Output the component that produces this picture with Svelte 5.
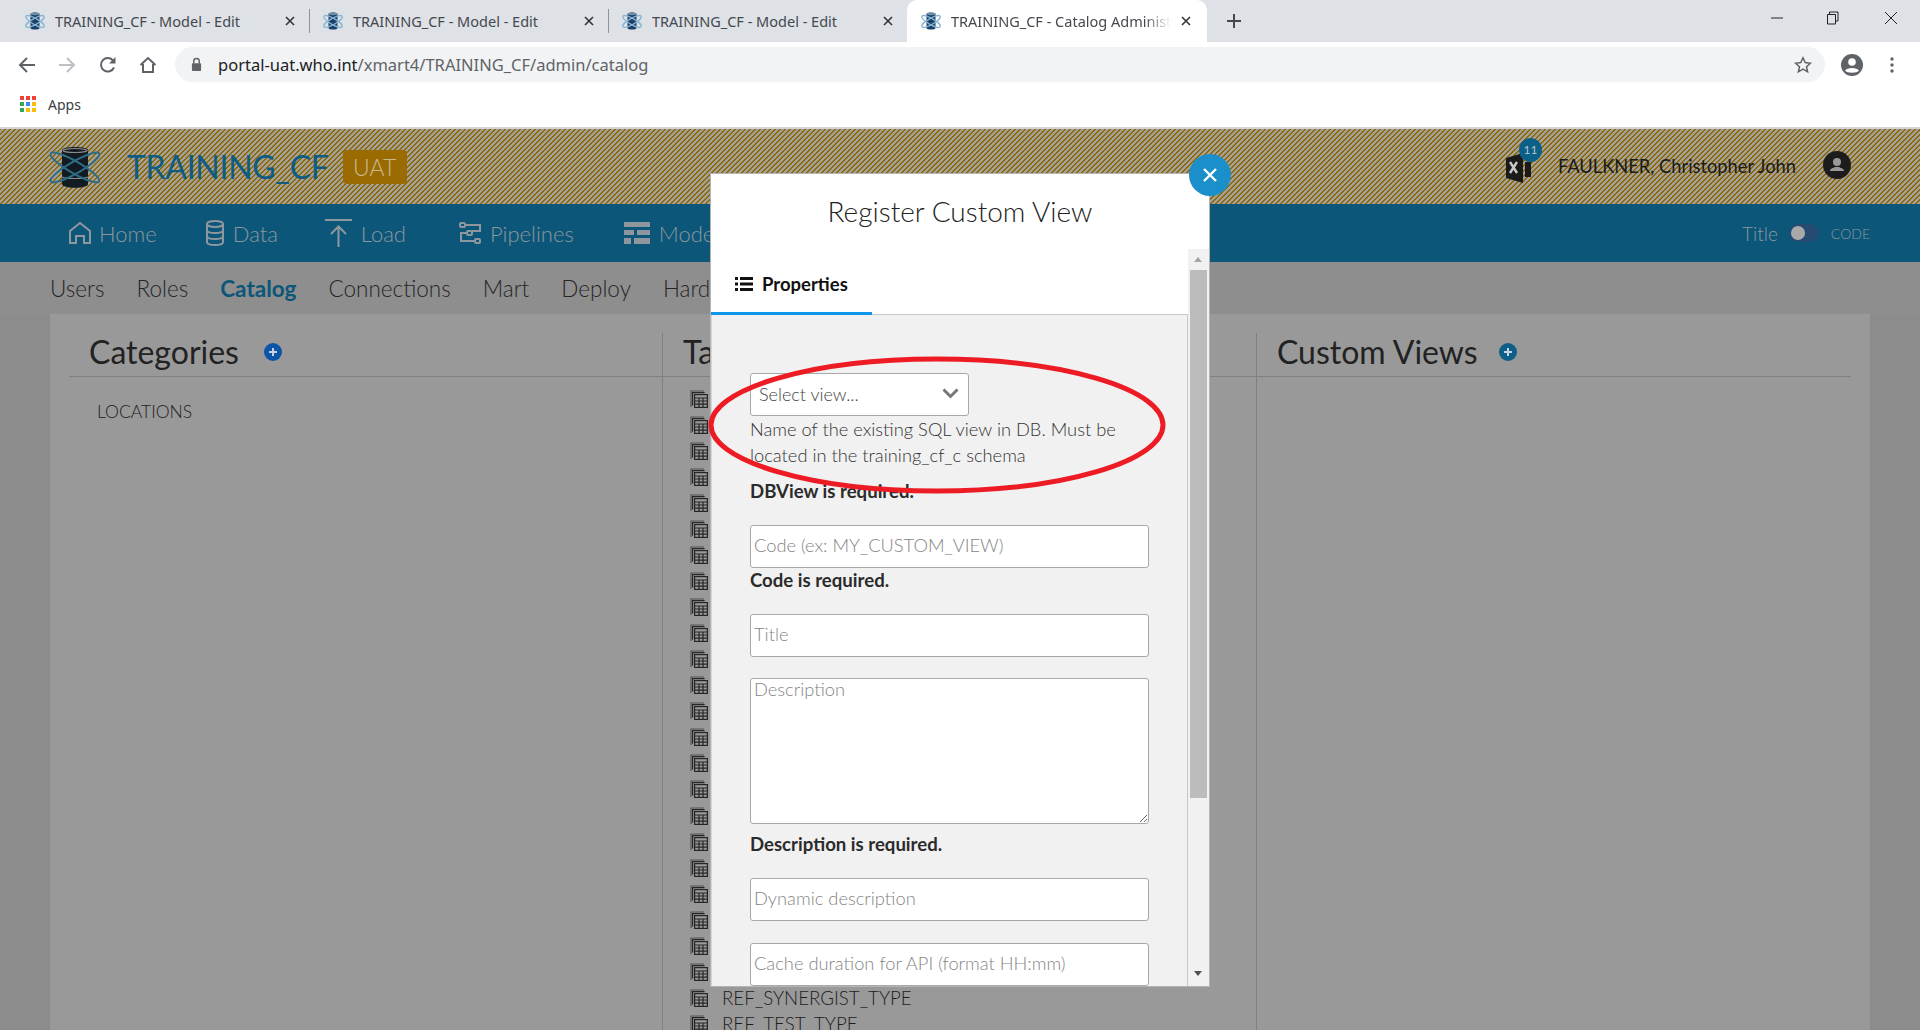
<script>
  const tabs = [
    { title: "TRAINING_CF - Model - Edit" },
    { title: "TRAINING_CF - Model - Edit" },
    { title: "TRAINING_CF - Model - Edit" },
    { title: "TRAINING_CF - Catalog Administrator", active: true }
  ];
  const subnav = ["Users", "Roles", "Catalog", "Connections", "Mart", "Deploy", "Hardening"];
  // only the last two rows stick out under the dialog
  const tables = [...Array(23).fill(""), "REF_SYNERGIST_TYPE", "REF_TEST_TYPE"];
  const appsColors = ["#ef4136", "#ef4136", "#ef4136", "#34a853", "#4285f4", "#fbbc05", "#34a853", "#fbbc05", "#fbbc05"];
</script>

{#snippet favicon()}
  <svg class="favicon" viewBox="0 0 20 20">
    <path d="M5.5 3c0-2 9-2 9 0v14c0 2-9 2-9 0z" fill="#1b3f66" />
    <ellipse cx="10" cy="3" rx="4.5" ry="1.2" fill="#6d8ca6" />
    <ellipse cx="10" cy="10.5" rx="10.5" ry="3" transform="rotate(30 10 10.5)" fill="none" stroke="#86b4d4" stroke-width="1.3" />
    <ellipse cx="10" cy="10.5" rx="10.5" ry="3" transform="rotate(-30 10 10.5)" fill="none" stroke="#86b4d4" stroke-width="1.3" />
  </svg>
{/snippet}

{#snippet tableIcon()}
  <svg class="table-icon" viewBox="0 0 18 18" fill="none" stroke="#262626" stroke-width="1.2">
    <path d="M2.6 15.5V2.6h12" />
    <path d="M1 17V1h13" opacity="0.6" />
    <rect x="4.6" y="4.6" width="12.8" height="12.8" />
    <path d="M4.6 8h12.8M4.6 11h12.8M4.6 14.2h12.8M9 8v9.4M13 8v9.4" />
  </svg>
{/snippet}

<div class="page">
  <div class="tabstrip">
    {#each tabs as tab, i}
      <div class="tab" class:active={tab.active} class:sep={i > 0 && !tab.active}>
        {@render favicon()}
        <span class="tab-title">{tab.title}</span>
        <svg class="tab-x" viewBox="0 0 10 10"><path d="M1 1l8 8M9 1l-8 8" stroke="#333" stroke-width="1.6" /></svg>
      </div>
    {/each}
    <svg class="newtab" viewBox="0 0 14 14"><path d="M7 0v14M0 7h14" stroke="#45484c" stroke-width="2" /></svg>
    <div class="winctl">
      <svg viewBox="0 0 14 14" class="w1"><path d="M1 7h12" stroke="#222" stroke-width="1" /></svg>
      <svg viewBox="0 0 14 14" class="w2"><path d="M3.5 3.5V1h8.5v9h-2.5M1.5 3.5h8v9.5h-8z" fill="none" stroke="#222" stroke-width="1" /></svg>
      <svg viewBox="0 0 14 14" class="w3"><path d="M1 1l12 12M13 1L1 13" stroke="#222" stroke-width="1" /></svg>
    </div>
  </div>

  <div class="toolbar">
    <svg class="tb back" viewBox="0 0 18 18"><path d="M17 9H2M9 2L2 9l7 7" fill="none" stroke="#5f6368" stroke-width="2" /></svg>
    <svg class="tb fwd" viewBox="0 0 18 18"><path d="M1 9h15M9 2l7 7-7 7" fill="none" stroke="#bdc1c6" stroke-width="2" /></svg>
    <svg class="tb reload" viewBox="0 0 18 18"><path d="M15 11.5A6.8 6.8 0 1 1 14.2 4.6" fill="none" stroke="#5f6368" stroke-width="2" /><path d="M16.5 1v6.5H10z" fill="#5f6368" /></svg>
    <svg class="tb home" viewBox="0 0 18 18"><path d="M1.5 9L9 2l7.5 7M4 8v8h10V8" fill="none" stroke="#5f6368" stroke-width="2" /></svg>
    <div class="omnibox">
      <svg class="lock" viewBox="0 0 12 16"><path d="M3 7V4.5a3 3 0 0 1 6 0V7" fill="none" stroke="#5f6368" stroke-width="1.6" /><rect x="1" y="6.5" width="10" height="8.5" rx="1" fill="#5f6368" /></svg>
      <span class="url"><b>portal-uat.who.int</b>/xmart4/TRAINING_CF/admin/catalog</span>
      <svg class="star" viewBox="0 0 18 18"><path d="M9 1.8l2.2 4.8 5.2.6-3.9 3.5 1.1 5.1L9 13.2l-4.6 2.6 1.1-5.1L1.6 7.2l5.2-.6z" fill="none" stroke="#5f6368" stroke-width="1.5" /></svg>
    </div>
    <svg class="profile" viewBox="0 0 22 22">
      <circle cx="11" cy="11" r="11" fill="#5f6368" />
      <circle cx="11" cy="8" r="3.8" fill="#fff" />
      <path d="M4 16.5c2-3.5 12-3.5 14 0-2 3-12 3-14 0z" fill="#fff" />
    </svg>
    <svg class="dots" viewBox="0 0 4 18"><circle cx="2" cy="3" r="1.7" fill="#5f6368" /><circle cx="2" cy="9" r="1.7" fill="#5f6368" /><circle cx="2" cy="15" r="1.7" fill="#5f6368" /></svg>
  </div>

  <div class="bookmarks">
    <div class="apps-grid">
      {#each appsColors as c}<i style="background:{c}"></i>{/each}
    </div>
    <span>Apps</span>
  </div>

  <header class="brand">
    <svg class="logo" viewBox="0 0 50 42">
      <path d="M12 4c0-4 26-4 26 0v34c0 5-26 5-26 0z" fill="#121a22" />
      <ellipse cx="25" cy="4.5" rx="12" ry="2" fill="none" stroke="#8a8a8a" stroke-width="1.2" />
      <path d="M12 31c4 2 22 2 26 0" fill="none" stroke="#8a8a8a" stroke-width="1.2" />
      <ellipse cx="25" cy="21.5" rx="28" ry="6" transform="rotate(30 25 21.5)" fill="none" stroke="#2f6c86" stroke-width="2" />
      <ellipse cx="25" cy="21.5" rx="28" ry="6" transform="rotate(-30 25 21.5)" fill="none" stroke="#2f6c86" stroke-width="2" />
    </svg>
    <span class="brand-name">TRAINING_CF</span>
    <span class="uat">UAT</span>
    <div class="user">
      <div class="excel">
        <svg viewBox="0 0 26 30"><path d="M0 5L17 0v30L0 25z" fill="#1a1a1a" /><path d="M19 9h6v15h-6z" fill="#1a1a1a" /><path d="M4 9l7 11M11 9l-7 11" stroke="#c8c8c8" stroke-width="2.4" /></svg>
        <span class="badge">11</span>
      </div>
      <span class="username">FAULKNER, Christopher John</span>
      <svg class="avatar" viewBox="0 0 28 28">
        <circle cx="14" cy="14" r="14" fill="#1c1c1c" />
        <circle cx="14" cy="11" r="4" fill="#999" />
        <path d="M7 20c0-3 4-3 5-4h4c1 1 5 1 5 4z" fill="#999" />
      </svg>
    </div>
  </header>

  <nav class="mainnav">
    <a class="home-link">
      <svg width="22" height="24" viewBox="0 0 22 24" fill="none" stroke="#8d979d" stroke-width="2"><path d="M1 22V10L11 2l10 8v12h-6v-7H7v7z" /></svg>
      Home
    </a>
    <a class="data-link">
      <svg width="18" height="26" viewBox="0 0 18 26" fill="none" stroke="#8d979d" stroke-width="2"><ellipse cx="9" cy="4" rx="8" ry="3" /><path d="M1 4v18c0 4 16 4 16 0V4M1 10c0 4 16 4 16 0M1 16c0 4 16 4 16 0" /></svg>
      Data
    </a>
    <a class="load-link">
      <svg width="27" height="28" viewBox="0 0 27 28" fill="none" stroke="#8d979d" stroke-width="2"><path d="M0 1h27M13.5 28V8M6 15l7.5-7.5L21 15" /></svg>
      Load
    </a>
    <a class="pipe-link">
      <svg width="22" height="22" viewBox="0 0 22 22" fill="none" stroke="#8d979d" stroke-width="2"><rect x="1" y="1" width="5" height="4" rx="1" /><rect x="8" y="9" width="5" height="4" rx="1" /><rect x="16" y="17" width="5" height="4" rx="1" /><path d="M6 3h15v6h-8M8 11H2v8h14" /></svg>
      Pipelines
    </a>
    <a class="model-link">
      <svg width="26" height="22" viewBox="0 0 26 22" fill="#8d979d"><path d="M0 0h26v5H0zM0 8h10v5H0zM13 8h13v5H13zM0 16h7v6H0zM10 16h16v6H10z" /></svg>
      Models
    </a>
    <div class="code-toggle">
      <span class="toggle-title">Title</span>
      <span class="toggle"><i></i></span>
      <span class="toggle-code">CODE</span>
    </div>
  </nav>

  <nav class="subnav">
    {#each subnav as item}
      <a class:current={item === "Catalog"}>{item}</a>
    {/each}
  </nav>

  <main class="workspace">
    <div class="panel">
      <section class="col">
        <h2>Categories <svg class="add" viewBox="0 0 18 18"><circle cx="9" cy="9" r="9" fill="#0b54a8" /><path d="M9 5v8M5 9h8" stroke="#c8d4e0" stroke-width="2" /></svg></h2>
        <div class="category">LOCATIONS</div>
      </section>
      <section class="col">
        <h2>Tables</h2>
        <ul class="tables">
          {#each tables as name}
            <li>{@render tableIcon()}<span>{name}</span></li>
          {/each}
        </ul>
      </section>
      <section class="col">
        <h2>Custom Views <svg class="add add-views" viewBox="0 0 18 18"><circle cx="9" cy="9" r="9" fill="#0c5f87" /><path d="M9 5v8M5 9h8" stroke="#c8d4e0" stroke-width="2" /></svg></h2>
      </section>
    </div>
  </main>

  <div class="modal">
    <div class="modal-head">Register Custom View</div>
    <div class="modal-scroll">
      <div class="modal-inner">
        <div class="modal-tabs">
          <div class="modal-tab">
            <svg width="18" height="14" viewBox="0 0 18 14" fill="#111"><path d="M0 0h3v3H0zM5 0h13v3H5zM0 5.5h3v3H0zM5 5.5h13v3H5zM0 11h3v3H0zM5 11h13v3H5z" /></svg>
            Properties
          </div>
        </div>
        <form class="form">
          <div class="select">
            <span>Select view...</span>
            <svg width="17" height="11" viewBox="0 0 17 11"><path d="M1.5 1.5l7 7 7-7" fill="none" stroke="#777" stroke-width="3" /></svg>
          </div>
          <p class="help">Name of the existing SQL view in DB. Must be located in the training_cf_c schema</p>
          <p class="error first">DBView is required.</p>
          <input class="f-code" placeholder="Code (ex: MY_CUSTOM_VIEW)" />
          <p class="error">Code is required.</p>
          <input class="f-title" placeholder="Title" />
          <textarea class="f-desc" placeholder="Description"></textarea>
          <p class="error">Description is required.</p>
          <input class="f-dyn" placeholder="Dynamic description" />
          <input class="f-cache" placeholder="Cache duration for API (format HH:mm)" />
        </form>
      </div>
      <div class="scrollbar">
        <i class="arrow up"></i>
        <div class="thumb"></div>
        <i class="arrow down"></i>
      </div>
    </div>
  </div>

  <button class="modal-close" aria-label="close">
    <svg width="16" height="16" viewBox="0 0 16 16"><path d="M2 2l12 12M14 2L2 14" stroke="#fff" stroke-width="2.4" /></svg>
  </button>

  <svg class="circle-mark" width="470" height="148" viewBox="0 0 470 148">
    <ellipse cx="233" cy="74" rx="226" ry="66" fill="none" stroke="#ed1c24" stroke-width="5" />
  </svg>
</div>

<style>
  :global(body) {
    margin: 0;
    background: #fff;
  }

  .page {
    position: relative;
    width: 1920px;
    height: 1030px;
    overflow: hidden;
    display: flex;
    flex-direction: column;
    font-family: Lato, "Open Sans", sans-serif;
    color: #222;
  }

  /* browser chrome */
  .tabstrip {
    flex: 0 0 42px;
    display: flex;
    align-items: center;
    background: #dee1e6;
    font-family: "Noto Sans", "Open Sans", sans-serif;
  }

  .tab {
    position: relative;
    box-sizing: border-box;
    width: 299px;
    height: 42px;
    padding: 0 14px;
    display: flex;
    align-items: center;
    font-size: 14.5px;
    color: #45494e;
  }

  .tab:first-child {
    width: 309px;
    padding-left: 25px;
  }

  .tab.sep::before {
    content: "";
    position: absolute;
    left: 0;
    top: 9px;
    height: 24px;
    width: 1px;
    background: #8f9296;
  }

  .tab.active {
    width: 300px;
    padding-right: 16px;
    background: #fff;
    border-radius: 10px 10px 0 0;
  }

  .tab.active .tab-title {
    mask-image: linear-gradient(90deg, #000 88%, transparent);
    margin-right: 10px;
  }

  .favicon {
    width: 20px;
    height: 20px;
    flex: none;
    margin-right: 10px;
  }

  .tab-title {
    flex: 1;
    white-space: nowrap;
    overflow: hidden;
  }

  .tab-x {
    width: 10px;
    height: 10px;
    flex: none;
  }

  .newtab {
    width: 14px;
    height: 14px;
    margin-left: 20px;
  }

  .winctl {
    margin-left: auto;
    margin-top: -6px;
    display: flex;
    align-items: center;
  }

  .winctl svg {
    width: 14px;
    height: 14px;
  }

  .w1 {
    margin-right: 42px;
  }

  .w2 {
    margin-right: 44px;
  }

  .w3 {
    margin-right: 22px;
  }

  .toolbar {
    flex: 0 0 42px;
    box-sizing: border-box;
    padding-top: 3px;
    display: flex;
    align-items: center;
    background: #fff;
  }

  .tb {
    width: 18px;
    height: 18px;
    flex: none;
  }

  .back {
    margin-left: 18px;
  }

  .fwd {
    margin-left: 22px;
  }

  .reload {
    margin-left: 23px;
  }

  .home {
    margin-left: 22px;
  }

  .omnibox {
    margin-left: 18px;
    width: 1650px;
    height: 35px;
    border-radius: 18px;
    background: #f1f3f4;
    display: flex;
    align-items: center;
    font-family: "Noto Sans", "Open Sans", sans-serif;
  }

  .lock {
    width: 11px;
    height: 15px;
    margin-left: 16px;
  }

  .url {
    margin-left: 16px;
    font-size: 16.5px;
    color: #5f6368;
  }

  .url b {
    font-weight: 400;
    color: #202124;
  }

  .star {
    width: 18px;
    height: 18px;
    margin-left: auto;
    margin-right: 13px;
  }

  .profile {
    width: 22px;
    height: 22px;
    margin-left: 16px;
    flex: none;
  }

  .dots {
    width: 4px;
    height: 18px;
    margin-left: 27px;
    flex: none;
  }

  .bookmarks {
    flex: 0 0 43px;
    box-sizing: border-box;
    padding: 0 0 3px 20px;
    display: flex;
    align-items: center;
    background: #fff;
    font-family: "Noto Sans", "Open Sans", sans-serif;
    font-size: 14px;
    color: #3c4043;
  }

  .apps-grid {
    display: grid;
    grid-template-columns: repeat(3, 4px);
    grid-auto-rows: 4px;
    gap: 2px;
    margin-right: 12px;
  }

  /* app header, dimmed by the dialog backdrop */
  .brand {
    flex: 0 0 75px;
    border-top: 2px solid #d4d4d4;
    display: flex;
    align-items: center;
    padding-left: 50px;
    background-color: #a3a09a;
    background-image: linear-gradient(135deg, #8d6908 0 12%, transparent 12% 50%, #8d6908 50% 62%, transparent 62% 100%);
    background-size: 5px 5px;
  }

  .logo {
    width: 50px;
    height: 42px;
    flex: none;
    overflow: visible;
  }

  .brand-name {
    margin-left: 27px;
    font-size: 32px;
    font-weight: 400;
    letter-spacing: -0.3px;
    color: #0e5c82;
  }

  .uat {
    margin-left: 14px;
    width: 64px;
    height: 34px;
    border-radius: 4px;
    background: #9a6b00;
    color: #c9b98f;
    font-size: 23px;
    font-weight: 300;
    display: flex;
    align-items: center;
    justify-content: center;
  }

  .user {
    margin-left: auto;
    display: flex;
    align-items: center;
    padding-right: 69px;
  }

  .excel {
    position: relative;
    width: 26px;
    height: 30px;
    margin-top: 2px;
  }

  .excel svg {
    width: 26px;
    height: 30px;
  }

  .badge {
    position: absolute;
    left: 13px;
    top: -15px;
    width: 23px;
    height: 24px;
    border-radius: 50%;
    background: #0c5f87;
    color: #b8c4cc;
    font-size: 12px;
    display: flex;
    align-items: center;
    justify-content: center;
  }

  .username {
    margin: 0 0 2px 26px;
    font-size: 18.3px;
    color: #1a1a1a;
  }

  .avatar {
    width: 28px;
    height: 28px;
    margin: 0 0 4px 27px;
    flex: none;
  }

  .mainnav {
    flex: 0 0 58px;
    display: flex;
    align-items: center;
    background: #0c5679;
    color: #8d979d;
    font-size: 22px;
    font-weight: 300;
  }

  .mainnav a {
    display: flex;
    align-items: center;
    gap: 9px;
  }

  .mainnav .home-link {
    margin-left: 69px;
    gap: 8px;
  }

  .data-link {
    margin-left: 49px;
  }

  .load-link {
    margin-left: 47px;
  }

  .pipe-link {
    margin-left: 53px;
  }

  .model-link {
    margin-left: 50px;
  }

  .code-toggle {
    margin-left: auto;
    padding-right: 50px;
    display: flex;
    align-items: center;
  }

  .toggle-title {
    font-size: 19px;
  }

  .toggle {
    position: relative;
    width: 30px;
    height: 18px;
    border-radius: 9px;
    background: #254b73;
    margin: 0 12px 0 11px;
  }

  .toggle i {
    position: absolute;
    left: 2px;
    top: 2px;
    width: 14px;
    height: 14px;
    border-radius: 50%;
    background: #a9a9a9;
  }

  .toggle-code {
    font-size: 14px;
  }

  .subnav {
    flex: 0 0 52px;
    display: flex;
    align-items: center;
    gap: 32px;
    padding-left: 50px;
    background: #8e8e8e;
    font-size: 22.5px;
    font-weight: 300;
    color: #262626;
  }

  .subnav .current {
    color: #0c5679;
    font-weight: 700;
  }

  .workspace {
    flex: 1;
    min-height: 0;
    padding: 0 50px;
    background: #8c8c8c;
  }

  .panel {
    height: 100%;
    box-sizing: border-box;
    padding: 19px 19px 0;
    background: #999;
    display: grid;
    grid-template-columns: 593px 594px 595px;
  }

  .col + .col {
    border-left: 1px solid #808080;
  }

  .col h2 {
    margin: 0;
    height: 44px;
    box-sizing: border-box;
    border-bottom: 1px solid #808080;
    padding-left: 20px;
    display: flex;
    align-items: flex-start;
    font-size: 32px;
    font-weight: 400;
    line-height: 38px;
    color: #222;
    white-space: nowrap;
  }

  .add {
    width: 18px;
    height: 18px;
    margin: 10px 0 0 25px;
  }

  .col .add-views {
    margin-left: 21px;
  }

  .category {
    margin: 24px 0 0 28px;
    font-size: 17.5px;
    font-weight: 300;
    color: #1c1c1c;
  }

  .tables {
    list-style: none;
    margin: 9px 0 0;
    padding: 0 0 0 27px;
  }

  .tables li {
    height: 26.04px;
    display: flex;
    align-items: center;
    gap: 14px;
    font-size: 18.7px;
    font-weight: 300;
    color: #1c1c1c;
  }

  .table-icon {
    width: 18px;
    height: 18px;
    flex: none;
  }

  /* dialog */
  .modal {
    position: absolute;
    left: 711px;
    top: 174px;
    width: 498px;
    height: 812px;
    background: #fff;
    box-shadow: 0 0 0 1px #b4b4b4;
    display: flex;
    flex-direction: column;
  }

  .modal-head {
    flex: 0 0 75px;
    box-sizing: border-box;
    padding-top: 20px;
    text-align: center;
    font-size: 28px;
    font-weight: 300;
    color: #222;
  }

  .modal-scroll {
    flex: 1;
    min-height: 0;
    display: flex;
  }

  .modal-inner {
    flex: 1;
    min-width: 0;
    overflow: hidden;
  }

  .modal-tabs {
    height: 66px;
    box-sizing: border-box;
    border-bottom: 1px solid #c8c8c8;
  }

  .modal-tab {
    box-sizing: border-box;
    width: 161px;
    height: 66px;
    padding: 6px 0 0 24px;
    border-bottom: 3px solid #0d96ec;
    display: flex;
    align-items: center;
    gap: 9px;
    font-size: 18.5px;
    font-weight: 700;
    color: #111;
  }

  .form {
    box-sizing: border-box;
    height: 100%;
    padding: 58px 38px 0;
    background: #f1f1f1;
    border-left: 1px solid #d6d6d6;
    border-right: 1px solid #c8c8c8;
  }

  .select {
    box-sizing: border-box;
    width: 219px;
    height: 43px;
    padding: 0 9px 2px 8px;
    border: 1px solid #a8a8a8;
    border-radius: 3px;
    background: #fff;
    display: flex;
    align-items: center;
    justify-content: space-between;
    font-size: 18px;
    font-weight: 300;
    color: #444;
  }

  .help {
    margin: 0;
    font-size: 18.3px;
    font-weight: 300;
    line-height: 26px;
    color: #333;
  }

  .error {
    margin: 0;
    height: 24px;
    line-height: 24px;
    font-size: 18.6px;
    font-weight: 700;
    color: #2b2b2b;
  }

  .error.first {
    margin-top: 11px;
    margin-bottom: 22px;
  }

  input,
  textarea {
    display: block;
    box-sizing: border-box;
    width: 399px;
    border: 1px solid #a8a8a8;
    border-radius: 3px;
    background: #fff;
    font-family: inherit;
    font-size: 18.3px;
    font-weight: 300;
    padding: 0 4px 4px 3px;
    margin: 0;
    outline: none;
  }

  input {
    height: 43px;
  }

  input::placeholder,
  textarea::placeholder {
    color: #858585;
    opacity: 1;
  }

  .f-title {
    margin-top: 22px;
  }

  .f-desc {
    height: 146px;
    margin-top: 21px;
    margin-bottom: 8px;
    padding-top: 0;
    line-height: 20px;
  }

  .f-dyn {
    margin-top: 22px;
  }

  .f-cache {
    margin-top: 22px;
  }

  .scrollbar {
    flex: 0 0 21px;
    background: #f1f1f1;
    display: flex;
    flex-direction: column;
    align-items: center;
    position: relative;
  }

  .thumb {
    width: 17px;
    height: 528px;
    margin-top: 21px;
    background: #bcbcbc;
  }

  .arrow {
    position: absolute;
    left: 6px;
    width: 0;
    height: 0;
    border-left: 4.5px solid transparent;
    border-right: 4.5px solid transparent;
  }

  .arrow.up {
    top: 8px;
    border-bottom: 5px solid #a4a4a4;
  }

  .arrow.down {
    top: 722px;
    border-top: 5px solid #505050;
  }

  .modal-close {
    position: absolute;
    left: 1189px;
    top: 154px;
    width: 42px;
    height: 42px;
    padding: 0;
    border: 0;
    border-radius: 50%;
    background: #1b8fc9;
    display: flex;
    align-items: center;
    justify-content: center;
  }

  .circle-mark {
    position: absolute;
    left: 704px;
    top: 351px;
    pointer-events: none;
  }
</style>
